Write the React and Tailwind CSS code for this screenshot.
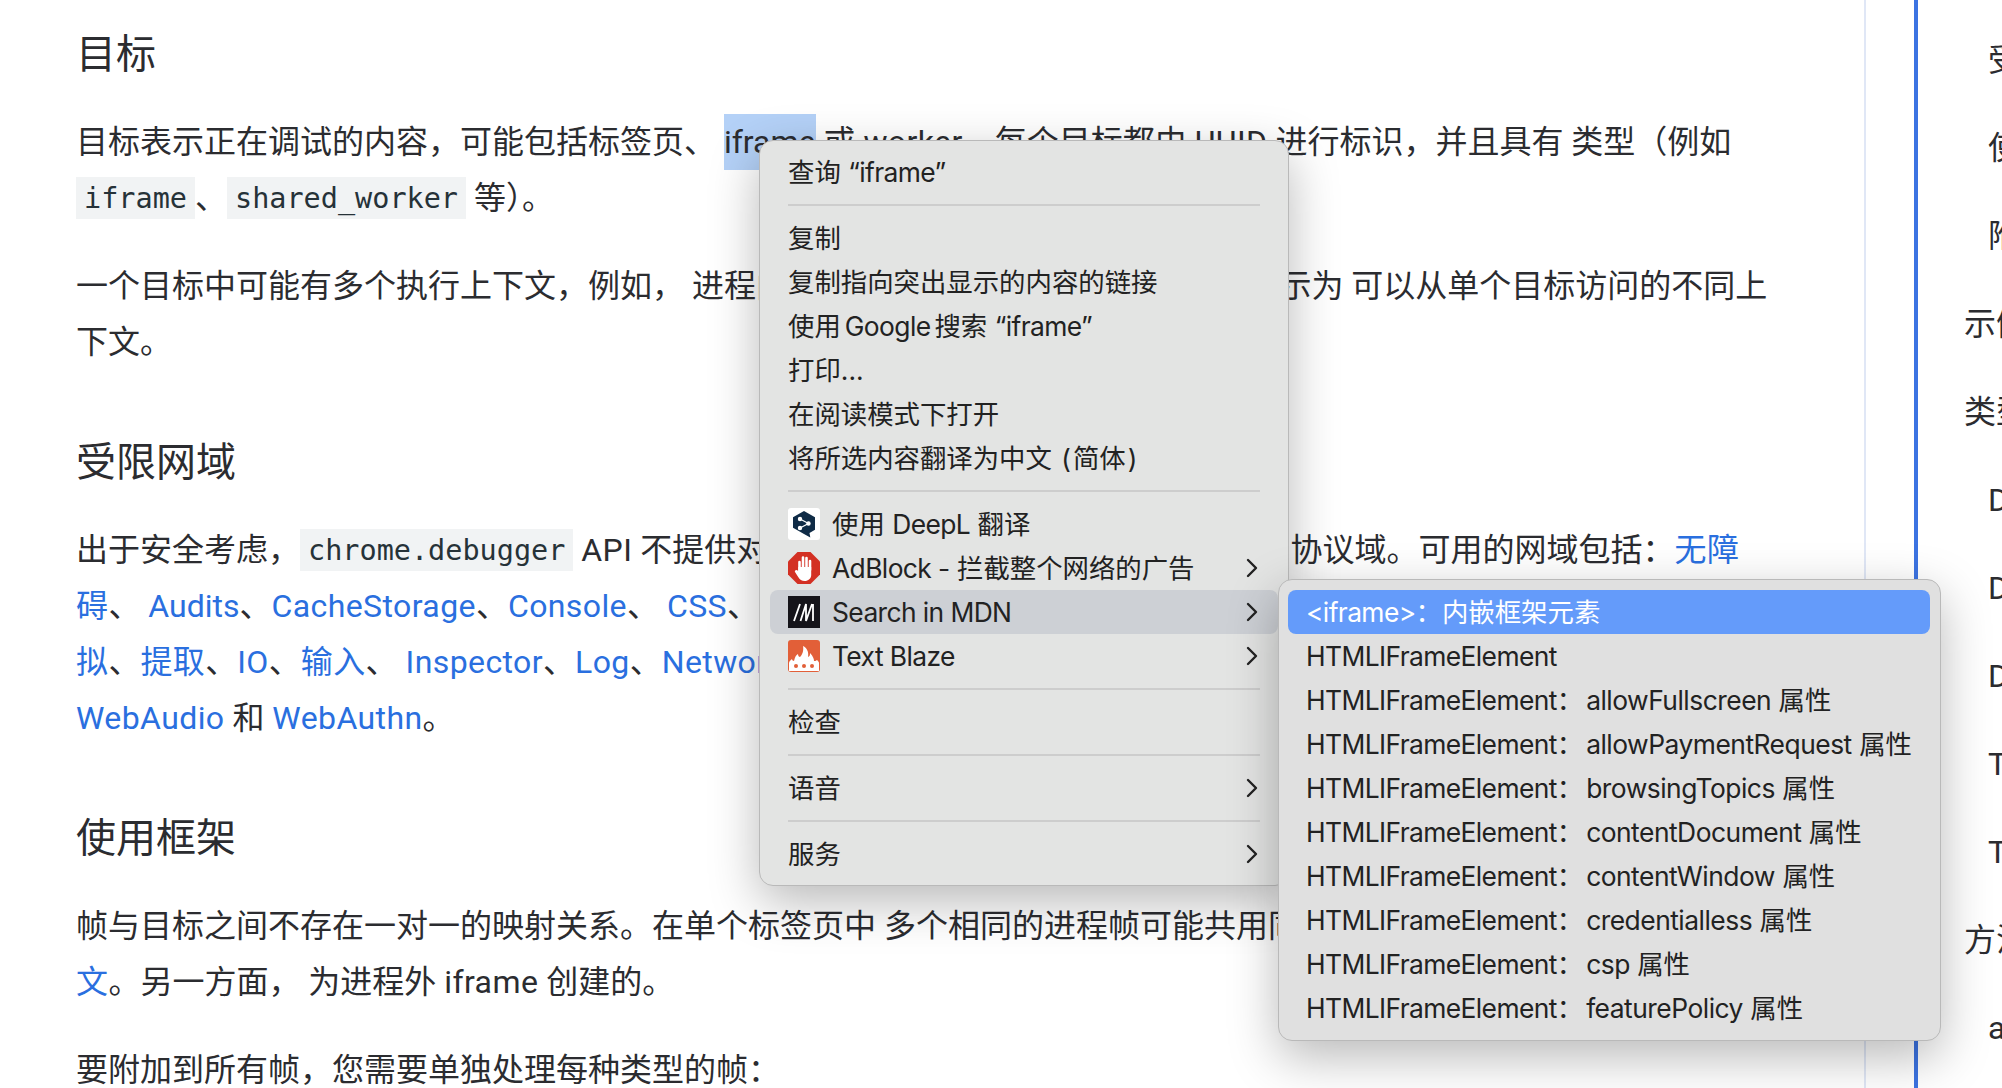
import React from 'react';

const BODY_FONT = "font-['Roboto','Noto_Sans_CJK_SC',sans-serif]";
const MENU_FONT = "font-['Inter','Noto_Sans_CJK_SC',sans-serif]";

function Code({ children }) {
  return (
    <code className="bg-[#f1f3f4] px-2 py-[4.5px] align-[2px] font-['DejaVu_Sans_Mono','Liberation_Mono',monospace] text-[28.5px] leading-none text-[#263238]">
      {children}
    </code>
  );
}

// Latin runs sit a little wider in the body and a little tighter in the menus
function L({ children }) {
  return <span className="tracking-[0.4px]">{children}</span>;
}

function M({ children }) {
  return <span className="tracking-[-0.6px]">{children}</span>;
}

function A({ children }) {
  return <a className="tracking-[0.4px] text-[#2a6fdf]">{children}</a>;
}

function H2({ first, children }) {
  return <h2 className={`${first ? 'pt-px' : 'mt-[65px]'} mb-[31px] text-[40px] leading-[56px]`}>{children}</h2>;
}

function Chevron() {
  return (
    <svg width="12" height="20" viewBox="0 0 12 20" fill="none" stroke="#222" strokeWidth="2.4" strokeLinecap="round" strokeLinejoin="round">
      <path d="M2 2l8 8-8 8" />
    </svg>
  );
}

function DeepLIcon() {
  return (
    <svg width="32" height="32" viewBox="0 0 32 32" className="shrink-0">
      <rect width="32" height="32" rx="3" fill="#fff" />
      <path d="M16 3l11 6.300v12.400l-5.500 3.200.8 4.600-6.300-3.400-11-6.400V9.300z" fill="#0f2b46" />
      <g stroke="#fff" strokeWidth="1.200" fill="#fff">
        <path d="M12 11l8.500 4.500L12 20" fill="none" />
        <circle cx="12" cy="11" r="1.600" />
        <circle cx="20.500" cy="15.500" r="1.600" />
        <circle cx="12" cy="20" r="1.600" />
      </g>
    </svg>
  );
}

function AdBlockIcon() {
  return (
    <svg width="32" height="32" viewBox="0 0 32 32" className="shrink-0">
      <path d="M9.500 0h13L32 9.500v13L22.500 32h-13L0 22.500v-13z" fill="#d33023" />
      <g stroke="#fff" strokeWidth="2.600" strokeLinecap="round">
        <path d="M11.500 10v9M15 5.500V17M18.500 6v11M22 9V18" />
      </g>
      <path d="M10.300 15h12.900v8c0 3.500-3 6-6.500 6-3 0-5-1.500-6.500-4l-3.200-5c-.8-1.500 1.200-3 2.700-1.500l.6.800z" fill="#fff" />
    </svg>
  );
}

function MdnIcon() {
  return (
    <svg width="32" height="32" viewBox="0 0 32 32" className="shrink-0">
      <rect width="32" height="32" fill="#15141a" />
      <path d="M6 25L12 8M12.500 25L18 8v17L24 8M25 8v17" stroke="#fff" strokeWidth="1.800" fill="none" />
    </svg>
  );
}

function BlazeIcon() {
  return (
    <svg width="32" height="32" viewBox="0 0 32 32" className="shrink-0">
      <rect width="32" height="32" rx="3" fill="#e25f38" />
      <path d="M1 31V23c0-2 2-3 3-4 0 1 1 2 2 2 1-3 1-5 4-7 0 2 1 3 2 3 2-2 4-6 3-11 4 2 6 6 5 11 2-1 2-2 2-4 3 3 4 6 4 8 1 0 2 0 3-1 1 1 2 2 2 3v8z" fill="#fff" />
      <circle cx="8" cy="26" r="2" fill="#e25f38" />
      <circle cx="16" cy="26" r="2" fill="#e25f38" />
      <circle cx="24" cy="26" r="2" fill="#e25f38" />
    </svg>
  );
}

function MenuRow({ icon, label, arrow, active }) {
  return (
    <div className={`flex h-11 items-center rounded-lg pl-[18px] pr-5 ${active ? 'bg-[#cdd0d5]' : ''}`}>
      {icon && <span className="mr-3 flex">{icon}</span>}
      <span className="flex-1 whitespace-nowrap">{label}</span>
      {arrow && <Chevron />}
    </div>
  );
}

function Sep() {
  return <div className="mx-[18px] my-[10px] h-[2px] w-[472px] bg-[#cdcdcd]" />;
}

function ContextMenu() {
  return (
    <div className={`${MENU_FONT} absolute left-[759px] top-[140px] z-10 w-[530px] rounded-[14px] border border-[#b9b9b9] bg-[#e3e4e3] px-[10px] py-[9px] text-[26.4px] text-[#222] shadow-[0_16px_50px_rgba(0,0,0,0.28)]`}>
      <MenuRow label={<>查询 <M>“iframe”</M></>} />
      <Sep />
      <MenuRow label="复制" />
      <MenuRow label="复制指向突出显示的内容的链接" />
      <MenuRow label={<>使用<span className="mx-1"><M>Google</M></span>搜索 <M>“iframe”</M></>} />
      <MenuRow label="打印..." />
      <MenuRow label="在阅读模式下打开" />
      <MenuRow label={<>将所选内容翻译为中文 <span className="mx-[2px]">(</span>简体<span className="mx-[2px]">)</span></>} />
      <Sep />
      <MenuRow icon={<DeepLIcon />} label={<>使用 <M>DeepL</M> 翻译</>} />
      <MenuRow icon={<AdBlockIcon />} label={<><M>AdBlock -</M> 拦截整个网络的广告</>} arrow />
      <MenuRow icon={<MdnIcon />} label={<M>Search in MDN</M>} arrow active />
      <MenuRow icon={<BlazeIcon />} label={<M>Text Blaze</M>} arrow />
      <Sep />
      <MenuRow label="检查" />
      <Sep />
      <MenuRow label="语音" arrow />
      <Sep />
      <MenuRow label="服务" arrow />
    </div>
  );
}

const SUB_PROPS = [
  'allowFullscreen',
  'allowPaymentRequest',
  'browsingTopics',
  'contentDocument',
  'contentWindow',
  'credentialless',
  'csp',
  'featurePolicy',
];

function SubMenu() {
  return (
    <div className={`${MENU_FONT} absolute left-[1278px] top-[579px] z-20 w-[663px] rounded-[14px] border border-[#b9b9b9] bg-[#e0e0e0] py-[10px] pl-[9px] pr-[10px] text-[26.4px] text-[#222] shadow-[0_16px_50px_rgba(0,0,0,0.28)]`}>
      <div className="flex h-11 items-center rounded-lg bg-[#649bfa] px-[18px] text-white"><span><M>&lt;iframe&gt;</M>：内嵌框架元素</span></div>
      <div className="flex h-11 items-center whitespace-nowrap px-[18px]"><M>HTMLIFrameElement</M></div>
      {SUB_PROPS.map((prop) => (
        <div key={prop} className="flex h-11 items-center whitespace-nowrap px-[18px]">
          <span><M>HTMLIFrameElement</M>：<span className="ml-[3px] tracking-[-0.5px]">{prop}</span> 属性</span>
        </div>
      ))}
    </div>
  );
}

const TOC = [
  ['受限网域', true],
  ['使用框架', true],
  ['附加到相关标签页', true],
  ['示例', false],
  ['类型', false],
  ['Debuggee', true],
  ['DebuggerSession', true],
  ['DetachReason', true],
  ['TargetInfo', true],
  ['TargetInfoType', true],
  ['方法', false],
  ['attach', true],
];

export default function App() {
  return (
    <div className={`${BODY_FONT} relative flex h-[1088px] w-[2002px] overflow-hidden bg-white text-[32px] leading-[56px] text-[#2b2c30]`}>
      <main className="w-[1866px] shrink-0 whitespace-nowrap border-r-2 border-[#e0e7f6] pl-[76px] pt-[26px]">
        <H2 first>目标</H2>
        <p>
          目标表示正在调试的内容，可能包括标签页、 <span className="inline-block bg-[#b4d1f7]">iframe</span> 或 <L>worker</L>。每个目标都由 <L>UUID</L> 进行标识，并且具有 类型（例如
          <br />
          <Code>iframe</Code>、<Code>shared_worker</Code> 等）。
        </p>
        <p className="mt-8">
          一个目标中可能有多个执行上下文，例如， 进程内 iframe 会获得唯一的上下文，但显示为 可以从单个目标访问的不同上
          <br />
          下文。
        </p>
        <H2>受限网域</H2>
        <p>
          出于安全考虑，<Code>chrome.debugger</Code> <L>API</L> 不提供对所有 <L>Chrome</L> 开发者工具 <span className="mr-[17px] tracking-[0.4px]">DevTools</span> 协议域。可用的网域包括：<A>无障</A>
          <br />
          <A>碍</A>、 <span className="text-[#2a6fdf]">Audits</span>、<A>CacheStorage</A>、<A>Console</A>、 <A>CSS</A>、 <A>Database</A>、<A>Debugger</A>、<A>DOM</A>、<A>模</A>
          <br />
          <A>拟</A>、<A>提取</A>、<A>IO</A>、<A>输入</A>、 <A>Inspector</A>、<A>Log</A>、<A>Network</A>、<A>叠加层</A>、<A>性能</A>、
          <br />
          <A>WebAudio</A> 和 <A>WebAuthn</A>。
        </p>
        <H2>使用框架</H2>
        <p>
          帧与目标之间不存在一对一的映射关系。在单个标签页中 多个相同的进程帧可能共用同一个目标，但使用不同的<A>执行上下</A>
          <br />
          <A>文</A>。另一方面， 为进程外 <L>iframe</L> 创建的。
        </p>
        <p className="mt-8">要附加到所有帧，您需要单独处理每种类型的帧：</p>
      </main>
      <aside className="ml-12 flex flex-1 flex-col gap-8 border-l-4 border-[#3c73e2] pl-[46px] pt-8">
        {TOC.map(([label, nested]) => (
          <div key={label} className={`whitespace-nowrap ${nested ? 'ml-6' : ''}`}>{label}</div>
        ))}
      </aside>
      <ContextMenu />
      <SubMenu />
    </div>
  );
}
